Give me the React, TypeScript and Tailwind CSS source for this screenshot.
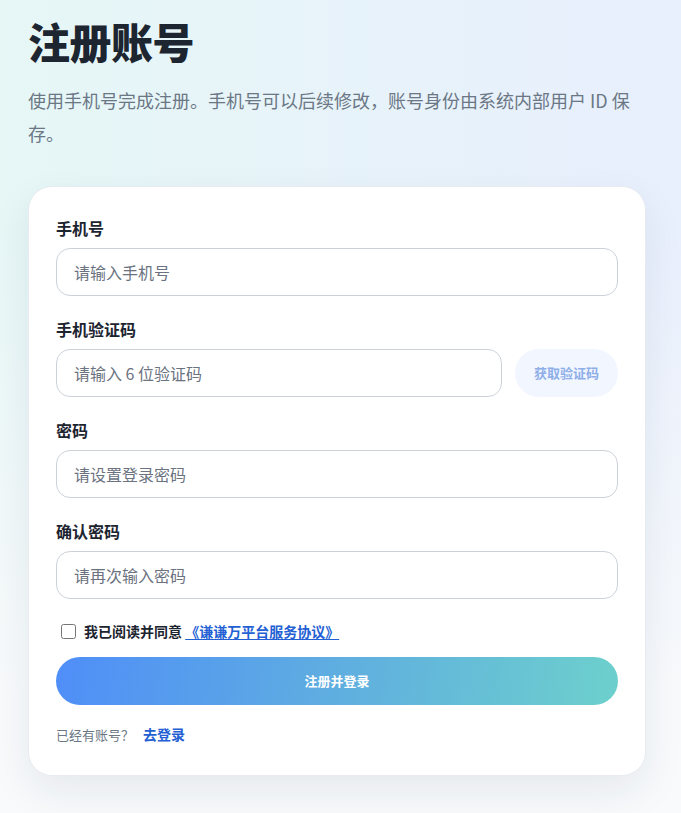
import { useState } from "react"

const font = "font-['Noto_Sans_CJK_SC','Noto_Sans',sans-serif]"

function Field({ label, placeholder, children }: { label: string; placeholder: string; children?: React.ReactNode }) {
  return (
    <div className="flex flex-col gap-[9px]">
      <label className="text-[16px] leading-[22px] font-bold text-[#1c2430]">{label}</label>
      <div className="flex gap-[13px]">
        <input
          placeholder={placeholder}
          className="flex-1 min-w-0 h-[48px] rounded-[14px] border border-[#cdd2d9] bg-white px-[17px] text-[16px] text-[#1c2430] placeholder:text-[#6b7280] outline-none"
        />
        {children}
      </div>
    </div>
  )
}

export default function App() {
  const [agree, setAgree] = useState(false)

  return (
    <div
      className={`${font} min-h-screen w-full bg-[linear-gradient(180deg,rgba(248,250,252,0)_0%,rgba(248,250,252,0)_25%,#f8fafc_85%),linear-gradient(90deg,#e6f7f6_0%,#e8effd_100%)] px-[28px] pt-[11px] pb-[38px]`}
    >
      <h1 className="text-[42px] leading-[60px] font-black text-[#1c2530] tracking-[-0.5px]">注册账号</h1>
      <p className="mt-[13px] text-[18px] leading-[33px] text-[#6b7785]">
        使用手机号完成注册。手机号可以后续修改，账号身份由系统内部用户 ID 保存。
      </p>

      {/* Card */}
      <div className="mt-[36px] w-[618px] rounded-[24px] bg-white border border-[#e8ecf1] shadow-[0_16px_40px_rgba(30,41,59,0.08)] px-[27px] pt-[30px] pb-[30px] flex flex-col">
        <div className="flex flex-col gap-[22px]">
          <Field label="手机号" placeholder="请输入手机号" />
          <Field label="手机验证码" placeholder="请输入 6 位验证码">
            <button className="h-[48px] w-[103px] shrink-0 rounded-full bg-[#f1f6ff] text-[13px] font-bold text-[#8eaee8]">
              获取验证码
            </button>
          </Field>
          <Field label="密码" placeholder="请设置登录密码" />
          <Field label="确认密码" placeholder="请再次输入密码" />
        </div>

        <label className="mt-[22px] ml-[5px] flex items-center gap-[8px] text-[14px] font-bold text-[#1c2430]">
          <input
            type="checkbox"
            checked={agree}
            onChange={e => setAgree(e.target.checked)}
            className="w-[15px] h-[15px] m-0 accent-[#2563eb]"
          />
          <span>
            我已阅读并同意{" "}
            <a href="#" className="text-[#2360d3] underline underline-offset-2">《谦谦万平台服务协议》</a>
          </span>
        </label>

        <button className="mt-[15px] h-[48px] w-full rounded-full bg-[linear-gradient(100deg,#4f8ef8_0%,#5faee0_50%,#6dd0cc_100%)] text-[13px] font-bold text-white">
          注册并登录
        </button>

        <p className="mt-[19px] text-[13px] leading-[20px] text-[#6b7785]">
          已经有账号？ <a href="#" className="ml-[6px] text-[14px] font-bold text-[#2360d3]">去登录</a>
        </p>
      </div>
    </div>
  )
}
